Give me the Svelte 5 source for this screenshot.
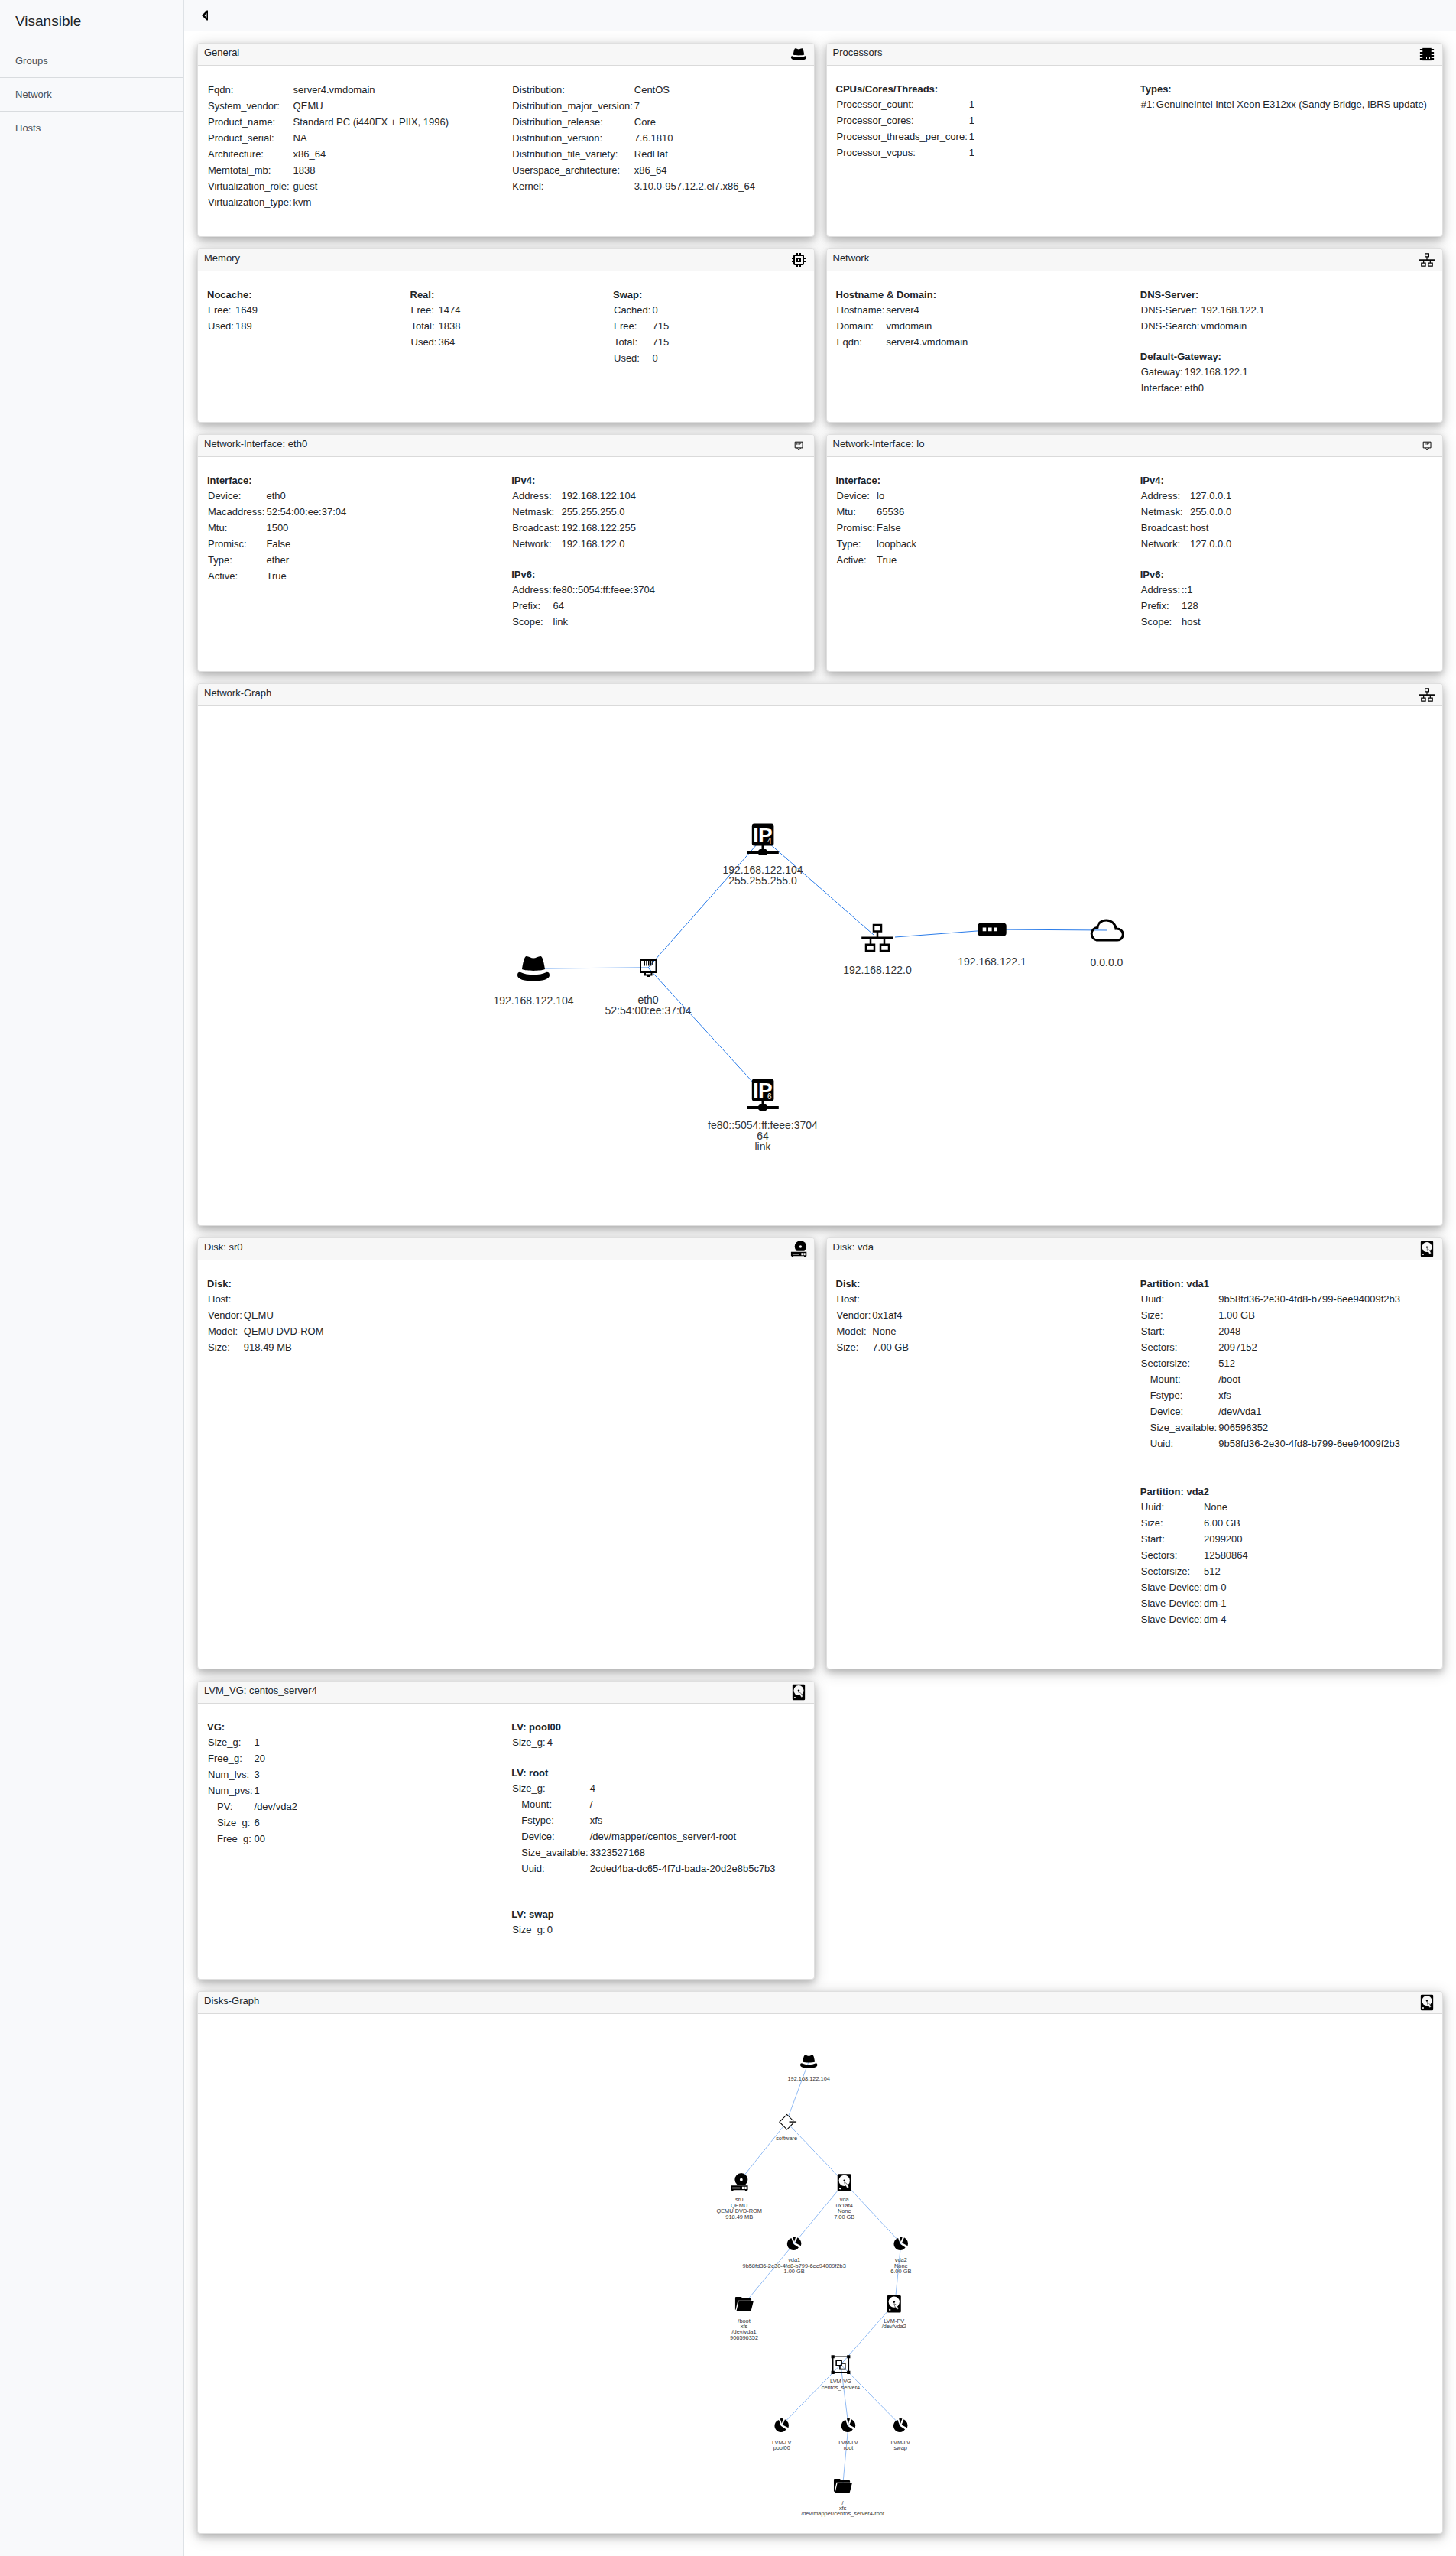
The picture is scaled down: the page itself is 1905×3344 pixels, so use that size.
<script lang="ts">
  type Row = [string, string, boolean?];
  type Block = { title?: string; rows: Row[]; gap?: 'gap-sm' | 'gap-md' | 'gap-lg' };
  type Card = { title: string; icon: string; columns: Block[][] };
  type GraphNode = { id: string; x: number; y: number; labelY: number; icon: string; label: string[] };

  const nav = ['Groups', 'Network', 'Hosts'];

  const cards: Card[] = [
    {
      title: 'General',
      icon: 'hat',
      columns: [
        [{ rows: [
          ['Fqdn:', 'server4.vmdomain'],
          ['System_vendor:', 'QEMU'],
          ['Product_name:', 'Standard PC (i440FX + PIIX, 1996)'],
          ['Product_serial:', 'NA'],
          ['Architecture:', 'x86_64'],
          ['Memtotal_mb:', '1838'],
          ['Virtualization_role:', 'guest'],
          ['Virtualization_type:', 'kvm'],
        ] }],
        [{ rows: [
          ['Distribution:', 'CentOS'],
          ['Distribution_major_version:', '7'],
          ['Distribution_release:', 'Core'],
          ['Distribution_version:', '7.6.1810'],
          ['Distribution_file_variety:', 'RedHat'],
          ['Userspace_architecture:', 'x86_64'],
          ['Kernel:', '3.10.0-957.12.2.el7.x86_64'],
        ] }],
      ],
    },
    {
      title: 'Processors',
      icon: 'cpu',
      columns: [
        [{ title: 'CPUs/Cores/Threads:', rows: [
          ['Processor_count:', '1'],
          ['Processor_cores:', '1'],
          ['Processor_threads_per_core:', '1'],
          ['Processor_vcpus:', '1'],
        ] }],
        [{ title: 'Types:', rows: [['#1:', 'GenuineIntel Intel Xeon E312xx (Sandy Bridge, IBRS update)']] }],
      ],
    },
    {
      title: 'Memory',
      icon: 'memory',
      columns: [
        [{ title: 'Nocache:', rows: [['Free:', '1649'], ['Used:', '189']] }],
        [{ title: 'Real:', rows: [['Free:', '1474'], ['Total:', '1838'], ['Used:', '364']] }],
        [{ title: 'Swap:', rows: [['Cached:', '0'], ['Free:', '715'], ['Total:', '715'], ['Used:', '0']] }],
      ],
    },
    {
      title: 'Network',
      icon: 'network',
      columns: [
        [{ title: 'Hostname & Domain:', rows: [
          ['Hostname:', 'server4'],
          ['Domain:', 'vmdomain'],
          ['Fqdn:', 'server4.vmdomain'],
        ] }],
        [
          { title: 'DNS-Server:', gap: 'gap-sm', rows: [['DNS-Server:', '192.168.122.1'], ['DNS-Search:', 'vmdomain']] },
          { title: 'Default-Gateway:', rows: [['Gateway:', '192.168.122.1'], ['Interface:', 'eth0']] },
        ],
      ],
    },
    {
      title: 'Network-Interface: eth0',
      icon: 'nic',
      columns: [
        [{ title: 'Interface:', rows: [
          ['Device:', 'eth0'],
          ['Macaddress:', '52:54:00:ee:37:04'],
          ['Mtu:', '1500'],
          ['Promisc:', 'False'],
          ['Type:', 'ether'],
          ['Active:', 'True'],
        ] }],
        [
          { title: 'IPv4:', gap: 'gap-sm', rows: [
            ['Address:', '192.168.122.104'],
            ['Netmask:', '255.255.255.0'],
            ['Broadcast:', '192.168.122.255'],
            ['Network:', '192.168.122.0'],
          ] },
          { title: 'IPv6:', gap: 'gap-sm', rows: [
            ['Address:', 'fe80::5054:ff:feee:3704'],
            ['Prefix:', '64'],
            ['Scope:', 'link'],
          ] },
        ],
      ],
    },
    {
      title: 'Network-Interface: lo',
      icon: 'nic',
      columns: [
        [{ title: 'Interface:', rows: [
          ['Device:', 'lo'],
          ['Mtu:', '65536'],
          ['Promisc:', 'False'],
          ['Type:', 'loopback'],
          ['Active:', 'True'],
        ] }],
        [
          { title: 'IPv4:', gap: 'gap-sm', rows: [
            ['Address:', '127.0.0.1'],
            ['Netmask:', '255.0.0.0'],
            ['Broadcast:', 'host'],
            ['Network:', '127.0.0.0'],
          ] },
          { title: 'IPv6:', gap: 'gap-sm', rows: [
            ['Address:', '::1'],
            ['Prefix:', '128'],
            ['Scope:', 'host'],
          ] },
        ],
      ],
    },
  ];

  const diskCards: Card[] = [
    {
      title: 'Disk: sr0',
      icon: 'dvd',
      columns: [
        [{ title: 'Disk:', rows: [
          ['Host:', ''],
          ['Vendor:', 'QEMU'],
          ['Model:', 'QEMU DVD-ROM'],
          ['Size:', '918.49 MB'],
        ] }],
        [],
      ],
    },
    {
      title: 'Disk: vda',
      icon: 'disk',
      columns: [
        [{ title: 'Disk:', rows: [
          ['Host:', ''],
          ['Vendor:', '0x1af4'],
          ['Model:', 'None'],
          ['Size:', '7.00 GB'],
        ] }],
        [
          { title: 'Partition: vda1', gap: 'gap-lg', rows: [
            ['Uuid:', '9b58fd36-2e30-4fd8-b799-6ee94009f2b3'],
            ['Size:', '1.00 GB'],
            ['Start:', '2048'],
            ['Sectors:', '2097152'],
            ['Sectorsize:', '512'],
            ['Mount:', '/boot', true],
            ['Fstype:', 'xfs', true],
            ['Device:', '/dev/vda1', true],
            ['Size_available:', '906596352', true],
            ['Uuid:', '9b58fd36-2e30-4fd8-b799-6ee94009f2b3', true],
          ] },
          { title: 'Partition: vda2', gap: 'gap-sm', rows: [
            ['Uuid:', 'None'],
            ['Size:', '6.00 GB'],
            ['Start:', '2099200'],
            ['Sectors:', '12580864'],
            ['Sectorsize:', '512'],
            ['Slave-Device:', 'dm-0'],
            ['Slave-Device:', 'dm-1'],
            ['Slave-Device:', 'dm-4'],
          ] },
        ],
      ],
    },
    {
      title: 'LVM_VG: centos_server4',
      icon: 'disk',
      columns: [
        [{ title: 'VG:', rows: [
          ['Size_g:', '1'],
          ['Free_g:', '20'],
          ['Num_lvs:', '3'],
          ['Num_pvs:', '1'],
          ['PV:', '/dev/vda2', true],
          ['Size_g:', '6', true],
          ['Free_g:', '00', true],
        ] }],
        [
          { title: 'LV: pool00', gap: 'gap-sm', rows: [['Size_g:', '4']] },
          { title: 'LV: root', gap: 'gap-md', rows: [
            ['Size_g:', '4'],
            ['Mount:', '/', true],
            ['Fstype:', 'xfs', true],
            ['Device:', '/dev/mapper/centos_server4-root', true],
            ['Size_available:', '3323527168', true],
            ['Uuid:', '2cded4ba-dc65-4f7d-bada-20d2e8b5c7b3', true],
          ] },
          { title: 'LV: swap', gap: 'gap-sm', rows: [['Size_g:', '0']] },
        ],
      ],
    },
  ];

  const netNodes: GraphNode[] = [
    { id: 'host', x: 439, y: 343, labelY: 385, icon: 'hat', label: ['192.168.122.104'] },
    { id: 'eth0', x: 589, y: 342, labelY: 384, icon: 'nic', label: ['eth0', '52:54:00:ee:37:04'] },
    { id: 'ip4', x: 739, y: 174, labelY: 214, icon: 'ip4', label: ['192.168.122.104', '255.255.255.0'] },
    { id: 'ip6', x: 739, y: 508, labelY: 548, icon: 'ip6', label: ['fe80::5054:ff:feee:3704', '64', 'link'] },
    { id: 'net', x: 889, y: 303, labelY: 345, icon: 'network', label: ['192.168.122.0'] },
    { id: 'gw', x: 1039, y: 292, labelY: 334, icon: 'router', label: ['192.168.122.1'] },
    { id: 'inet', x: 1189, y: 293, labelY: 335, icon: 'cloud', label: ['0.0.0.0'] },
  ];
  const netEdges: number[][] = [
    [439, 343, 589, 342],
    [589, 342, 739, 172],
    [589, 342, 739, 506],
    [739, 172, 884, 299],
    [912, 302, 1046, 292],
    [1039, 292, 1189, 293],
  ];

  const diskNodes: GraphNode[] = [
    { id: 'host', x: 1511, y: 117, labelY: 159, icon: 'hat', label: ['192.168.122.104'] },
    { id: 'software', x: 1456, y: 267, labelY: 307, icon: 'controller', label: ['software'] },
    { id: 'sr0', x: 1339, y: 416, labelY: 459, icon: 'dvd', label: ['sr0', 'QEMU', 'QEMU DVD-ROM', '918.49 MB'] },
    { id: 'vda', x: 1599, y: 417, labelY: 459, icon: 'disk', label: ['vda', '0x1af4', 'None', '7.00 GB'] },
    { id: 'vda1', x: 1475, y: 567, labelY: 608, icon: 'pie', label: ['vda1', '9b58fd36-2e30-4fd8-b799-6ee94009f2b3', '1.00 GB'] },
    { id: 'vda2', x: 1739, y: 567, labelY: 608, icon: 'pie', label: ['vda2', 'None', '6.00 GB'] },
    { id: 'boot', x: 1351, y: 717, labelY: 758, icon: 'folder', label: ['/boot', 'xfs', '/dev/vda1', '906596352'] },
    { id: 'pv', x: 1722, y: 717, labelY: 758, icon: 'disk', label: ['LVM-PV', '/dev/vda2'] },
    { id: 'vg', x: 1590, y: 867, labelY: 909, icon: 'group', label: ['LVM-VG', 'centos_server4'] },
    { id: 'pool', x: 1444, y: 1017, labelY: 1059, icon: 'pie', label: ['LVM-LV', 'pool00'] },
    { id: 'root', x: 1609, y: 1017, labelY: 1059, icon: 'pie', label: ['LVM-LV', 'root'] },
    { id: 'swap', x: 1738, y: 1017, labelY: 1059, icon: 'pie', label: ['LVM-LV', 'swap'] },
    { id: 'rootfs', x: 1595, y: 1167, labelY: 1208, icon: 'folder', label: ['/', 'xfs', '/dev/mapper/centos_server4-root'] },
  ];
  const diskEdges: number[][] = [
    [1511, 117, 1461, 252],
    [1448, 278, 1344, 408],
    [1466, 278, 1599, 417],
    [1599, 417, 1475, 567],
    [1599, 417, 1739, 567],
    [1475, 567, 1351, 717],
    [1739, 567, 1724, 717],
    [1722, 717, 1590, 867],
    [1590, 867, 1444, 1017],
    [1590, 867, 1609, 1017],
    [1590, 867, 1738, 1017],
    [1609, 1017, 1595, 1167],
  ];
</script>

{#snippet glyph(name: string)}
  {#if name === 'hat'}
    <path d="M-15 1C-14-6-12-16-9.500-16C-7-16.500-3-13.500 0-13.500C3-13.500 7-16.500 9.500-16C12-16 14-6 15 1C9 3.500-9 3.500-15 1Z" />
    <path d="M-17.500 4.700C-8 9.500 8 9.500 17.500 4.700C20 4.700 21 6 21 9C21 14 12 16.500 0 16.500C-12 16.500-21 14-21 9C-21 6-20 4.700-17.500 4.700Z" />
  {:else if name === 'cpu'}
    <path d="M-12-17H12V17H-12Z" />
    <path d="M-19-14.600H19V-10.400H-19ZM-19-6.200H19V-2.100H-19ZM-19 2.100H19V6.200H-19ZM-19 10.400H19V14.600H-19Z" />
    <path class="hole" d="M-2 6.200H0V12.500H-2ZM2.200 6.200H4.200V12.500H2.200ZM6.400 6.200H8.400V12.500H6.400Z" />
  {:else if name === 'memory'}
    <path transform="scale(2.080) translate(-12 -12)" d="M15 9H9v6h6V9zm-2 4h-2v-2h2v2zm8-2V9h-2V7c0-1.100-.9-2-2-2h-2V3h-2v2h-2V3H9v2H7c-1.100 0-2 .9-2 2v2H3v2h2v2H3v2h2v2c0 1.100.9 2 2 2h2v2h2v-2h2v2h2v-2h2c1.100 0 2-.9 2-2v-2h2v-2h-2v-2h2zm-4 6H7V7h10v10z" />
  {:else if name === 'network'}
    <path class="line medium" d="M-5-17H5V-8.500H-5ZM-15 8.700H-4V17H-15ZM4 8.700H15V17H4ZM0-8.500V0M-9 0V8.700M9 0V8.700" />
    <path d="M-20.800-1.500H20.800V2H-20.800Z" />
  {:else if name === 'nic'}
    <path class="line" d="M-10-10H10.500V6H-10Z M-4 6V9.500H4.500V6" />
    <path d="M-5.500-9H-4V-2.500H-5.500ZM-2.700-9H-1.200V-2.500H-2.700ZM0-9H1.500V-2.500H0ZM2.800-9H4.300V-2.500H2.800ZM5.200-9H6.400V-4H5.200ZM-2 9.500H2.500V12H-2Z" />
  {:else if name === 'ip4' || name === 'ip6'}
    <rect x="-14.200" y="-20.500" width="28.600" height="29" rx="3" />
    <path d="M-1.500 8H1.500V16H-1.500ZM-20.800 15H20.800V19H-20.800ZM-4 13H4L6 15V19L4 21H-4L-6 19V15Z" />
    <text class="mark" x="-13" y="4">I</text>
    <text class="mark" x="-6" y="4">P</text>
    <text class="digit" x="6" y="6">{name === 'ip4' ? '4' : '6'}</text>
  {:else if name === 'router'}
    <rect x="-18.700" y="-8.300" width="37.400" height="16.600" rx="3.500" />
    <path class="hole" d="M-12.300-2.400H-7.700V2.200H-12.300ZM-5-2.400H-.4V2.200H-5ZM2.300-2.400H6.900V2.200H2.300Z" />
  {:else if name === 'cloud'}
    <path class="line thick" d="M-13 13A8.500 8.500 0 0 1-12-3.800C-12-9-7-13-.5-13C6-13 11.500-8.500 12-2C17.500-2.500 21.300 1 21.300 5.500C21.300 10 18 13 14 13Z" />
  {:else if name === 'dvd'}
    <path d="M-5.500 5.500A16 16 0 1 1 15.500 5.500Z" />
    <circle class="hole" cx="5" cy="-6.300" r="3.600" />
    <path d="M-21 8H21.400V19.500H19V22.500H14.500V19.500H-14.500V22.500H-19V19.500H-21Z" />
    <path class="hole" d="M-17 12.500H2V15.500H-17ZM7 11H11.500V17H7ZM13.500 11H18V17H13.500Z" />
  {:else if name === 'disk'}
    <rect x="-17" y="-21.500" width="34" height="43" rx="3" />
    <circle class="hole" cx="0" cy="-5" r="13.500" />
    <circle cx="0" cy="-5" r="2.500" />
    <path class="arm" d="M0-1L5 1.500L11.500 11L7.500 14L1.500 5Z" />
    <circle class="hole" cx="-10.500" cy="14.500" r="2.200" />
  {:else if name === 'controller'}
    <path class="line" d="M-17.500 0L1-18.500L19.500 0L1 18.500Z" />
    <path class="dash" d="M6-2.300H24.500V2.300H6Z" />
  {:else if name === 'pie'}
    <path d="M-2 1.500L-7-13A15.500 15.500 0 1 0 11 10Z" />
    <path d="M0-4L-4-16.500Q0-17.500 4-16.500Z" />
    <path d="M2.500-1L8-14.500A17 17 0 0 1 16.500 6.500Z" />
  {:else if name === 'folder'}
    <path d="M-22 15V-15.500Q-22-17.500-20-17.500H-7L-3.500-13.500H16Q18-13.500 18-11.500V-8.500H-15.500L-20.500 13.500Z" />
    <path d="M-13.500-6H23L17.500 15.500Q17 17.500 15 17.500H-19Z" />
  {:else if name === 'group'}
    <path class="line thick" d="M-19.500-19.500H19.500V19.500H-19.500ZM-11-10H2V2.500H-11ZM2-3H11V11.500H-2V2.500" />
    <path d="M-23.500-23.500H-15.500V-15.500H-23.500ZM15.500-23.500H23.500V-15.500H15.500ZM-23.500 15.500H-15.500V23.500H-23.500ZM15.500 15.500H23.500V23.500H15.500Z" />
  {/if}
{/snippet}

{#snippet cardHead(title: string, icon: string)}
  <header class="card-head">
    <h2>{title}</h2>
    <svg class="head-icon" viewBox="-25 -25 50 50" aria-hidden="true">{@render glyph(icon)}</svg>
  </header>
{/snippet}

{#snippet factCard(card: Card)}
  <section class="card">
    {@render cardHead(card.title, card.icon)}
    <div class="card-body" class:thirds={card.columns.length === 3}>
      {#each card.columns as column}
        <div>
          {#each column as block}
            <div class="block {block.gap ?? ''}">
              {#if block.title}<h3>{block.title}</h3>{/if}
              <table>
                <tbody>
                  {#each block.rows as [label, value, nested]}
                    <tr>
                      <th scope="row" class:nested>{label}</th>
                      <td>{value}</td>
                    </tr>
                  {/each}
                </tbody>
              </table>
            </div>
          {/each}
        </div>
      {/each}
    </div>
  </section>
{/snippet}

{#snippet graphCard(title: string, icon: string, view: string, nodes: GraphNode[], edges: number[][])}
  <section class="card wide">
    {@render cardHead(title, icon)}
    <svg class="stage" viewBox={view} role="img" aria-label={title}>
      {#each edges as [x1, y1, x2, y2]}
        <line class="edge" {x1} {y1} {x2} {y2} />
      {/each}
      {#each nodes as node (node.id)}
        <g transform="translate({node.x} {node.y})">{@render glyph(node.icon)}</g>
        <text class="label">
          {#each node.label as line, i}
            <tspan x={node.x} y={node.labelY + 5 + i * 14}>{line}</tspan>
          {/each}
        </text>
      {/each}
    </svg>
  </section>
{/snippet}

<div class="app">
  <aside class="sidebar">
    <h1>Visansible</h1>
    <nav aria-label="Main">
      {#each nav as item}
        <a href="#{item.toLowerCase()}">{item}</a>
      {/each}
    </nav>
  </aside>

  <div class="page">
    <div class="topbar">
      <button type="button" aria-label="Toggle sidebar">
        <svg viewBox="0 0 10 14" aria-hidden="true">
          <path fill-rule="evenodd" d="M9 0.500V13.500H7.500L1 7L7.500 0.500ZM7.500 4L4.500 7L7.500 10Z" />
        </svg>
      </button>
    </div>
    <main>
      {#each cards as card}
        {@render factCard(card)}
      {/each}
      {@render graphCard('Network-Graph', 'network', '0 0 1628 679', netNodes, netEdges)}
      {#each diskCards as card}
        {@render factCard(card)}
      {/each}
      {@render graphCard('Disks-Graph', 'disk', '0 0 3078 1284', diskNodes, diskEdges)}
    </main>
  </div>
</div>

<style>
  :global(body) {
    margin: 0;
    background: #fff;
    color: #212529;
    font-family: 'Liberation Sans', Arial, sans-serif;
    font-size: 13px;
    line-height: 19px;
  }

  .app {
    display: flex;
    min-height: 100vh;
  }

  .sidebar {
    flex: 0 0 240px;
    background: #f8f9fb;
    border-right: 1px solid #dee2e6;
  }

  h1 {
    margin: 0;
    padding: 16px 20px 17px;
    font-size: 19px;
    font-weight: 400;
    line-height: 24px;
  }

  nav a {
    display: block;
    padding: 12px 20px;
    border-top: 1px solid #d9dcdf;
    color: #495057;
    text-decoration: none;
  }

  .page {
    flex: 1;
    min-width: 0;
  }

  .topbar {
    display: flex;
    align-items: center;
    height: 40px;
    padding: 0 20px;
    background: #f8f9fb;
    border-bottom: 1px solid #dee2e6;
  }

  .topbar button {
    display: flex;
    padding: 0 2px;
    border: 0;
    background: none;
  }

  .topbar svg {
    width: 10px;
    height: 14px;
  }

  main {
    display: grid;
    grid-template-columns: repeat(2, minmax(0, 1fr));
    gap: 15px;
    padding: 15px 17px 29px;
  }

  .card {
    border: 1px solid #dfdfdf;
    border-radius: 4px;
    background: #fff;
    box-shadow: 0 4px 10px rgba(0, 0, 0, 0.2), 0 4px 20px rgba(0, 0, 0, 0.19);
  }

  .wide {
    grid-column: 1 / -1;
  }

  .card-head {
    display: flex;
    justify-content: space-between;
    padding: 2px 8px;
    background: #f7f7f7;
    border-bottom: 1px solid #dadada;
    border-radius: 3px 3px 0 0;
  }

  h2 {
    margin: 0;
    font-size: 13px;
    font-weight: 400;
    line-height: 20px;
  }

  .head-icon {
    width: 24px;
    height: 24px;
  }

  .head-icon .hole {
    fill: #f7f7f7;
  }

  .card-body {
    display: grid;
    grid-template-columns: repeat(2, minmax(0, 1fr));
    column-gap: 3px;
    padding: 21px 0 34px 12px;
  }

  .thirds {
    grid-template-columns: repeat(3, minmax(0, 1fr));
  }

  h3 {
    margin: 0;
    font-size: 13px;
    font-weight: 700;
    line-height: 19px;
  }

  .gap-sm {
    margin-bottom: 20px;
  }

  .gap-md {
    margin-bottom: 40px;
  }

  .gap-lg {
    margin-bottom: 43px;
  }

  table {
    border-collapse: collapse;
  }

  th,
  td {
    height: 19px;
    padding: 1px;
    font-weight: 400;
    text-align: left;
    white-space: nowrap;
  }

  .nested {
    padding-left: 13px;
  }

  .stage {
    display: block;
    width: 100%;
    height: auto;
  }

  .label {
    fill: #343434;
    font-size: 14px;
    text-anchor: middle;
  }

  .edge {
    stroke: #2b7ce9;
    stroke-width: 1;
  }

  .hole {
    fill: #fff;
  }

  .line {
    fill: none;
    stroke: #000;
    stroke-width: 2;
  }

  .medium {
    stroke-width: 2.5;
  }

  .thick {
    stroke-width: 3;
  }

  .arm {
    fill: #fff;
    stroke: #000;
    stroke-width: 1;
  }

  .dash {
    fill: #333;
    stroke: #fff;
    stroke-width: 1;
  }

  .mark {
    fill: #fff;
    font-size: 28px;
    font-weight: 700;
  }

  .digit {
    fill: #fff;
    font-size: 10px;
  }
</style>
